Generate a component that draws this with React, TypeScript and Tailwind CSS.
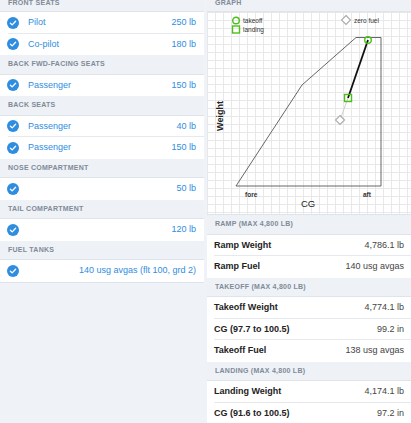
import React from "react";

const font = { fontFamily: '"Liberation Sans", Arial, sans-serif' };

function Check() {
  return (
    <svg width="12" height="12" viewBox="0 0 12 12" className="shrink-0">
      <circle cx="6" cy="6" r="6" fill="#2f8de0" />
      <path d="M3.4 6.2 L5.2 7.9 L8.6 4.3" stroke="#fff" strokeWidth="1.3" fill="none" strokeLinecap="round" strokeLinejoin="round" />
    </svg>
  );
}

function Header({ children, top }: { children: React.ReactNode; top?: boolean }) {
  return (
    <div className={`${top ? "h-[16.5px]" : "h-[19.5px]"} flex items-center px-[8px] bg-[#eef1f5] border-b border-[#dfe4ea] text-[7px] font-bold tracking-[0.25px] text-[#7f8b99] uppercase`}>
      {children}
    </div>
  );
}

function LeftRow({ label, value, last }: { label?: string; value: string; last?: boolean }) {
  return (
    <div className="h-[21.5px] flex items-center bg-white relative">
      <div className="pl-[7px] pr-[9px]"><Check /></div>
      <div className="flex-1 text-[9px] text-[#2f8de0]">{label}</div>
      <div className="pr-[8px] text-[9px] text-[#2f8de0]">{value}</div>
      {!last && <div className="absolute bottom-0 left-[8px] right-0 h-px bg-[#e6eaef]" />}
    </div>
  );
}

function RightRow({ label, value, last }: { label: string; value: string; last?: boolean }) {
  return (
    <div className="h-[21.5px] flex items-center bg-white relative px-[7px]">
      <div className="flex-1 text-[9px] font-bold text-[#222]">{label}</div>
      <div className="text-[9px] text-[#444]">{value}</div>
      {!last && <div className="absolute bottom-0 left-[7px] right-0 h-px bg-[#e6eaef]" />}
    </div>
  );
}

function Graph() {
  return (
    <div className="relative h-[203px] bg-white bg-[linear-gradient(to_right,#e8e8e8_1px,transparent_1px),linear-gradient(to_bottom,#e8e8e8_1px,transparent_1px)] bg-[size:8px_8px] border-b border-[#dfe4ea]">
      <svg width="204" height="203" className="absolute inset-0" style={font}>
        <polygon points="29,174 95,73 149,25.5 174,25.5 174,174" fill="none" stroke="#555" strokeWidth="0.9" />
        <line x1="141" y1="86" x2="133" y2="108" stroke="#ccc" strokeWidth="1" />
        <line x1="161" y1="28" x2="141" y2="86" stroke="#111" strokeWidth="1.8" />
        <circle cx="161" cy="28" r="3.3" fill="none" stroke="#4cbf1a" strokeWidth="1.4" />
        <rect x="137.5" y="82.5" width="7" height="7" fill="none" stroke="#4cbf1a" strokeWidth="1.4" />
        <polygon points="133,103.5 137.5,108 133,112.5 128.5,108" fill="#fff" stroke="#aaa" strokeWidth="1.1" />
        <circle cx="29" cy="8.5" r="3.3" fill="none" stroke="#4cbf1a" strokeWidth="1.4" />
        <text x="36" y="11" fontSize="6.5" fill="#333">takeoff</text>
        <rect x="25.5" y="14" width="7" height="7" fill="none" stroke="#4cbf1a" strokeWidth="1.4" />
        <text x="36" y="20" fontSize="6.5" fill="#333">landing</text>
        <polygon points="139,3.5 143.5,8 139,12.5 134.5,8" fill="#fff" stroke="#aaa" strokeWidth="1.1" />
        <text x="147" y="10.5" fontSize="6.5" fill="#333">zero fuel</text>
        <text x="0" y="0" fontSize="9" fontWeight="bold" fill="#222" textAnchor="middle" transform="translate(16 104) rotate(-90)">Weight</text>
        <text x="38" y="184.5" fontSize="6.5" fontWeight="bold" fill="#333">fore</text>
        <text x="156" y="184.5" fontSize="6.5" fontWeight="bold" fill="#333">aft</text>
        <text x="101" y="195" fontSize="9.5" fill="#222" textAnchor="middle">CG</text>
      </svg>
    </div>
  );
}

export default function App() {
  return (
    <div className="w-[411px] h-[423px] overflow-hidden bg-[#eff2f6]" style={font}>
      <div className="flex gap-[3px] mt-[-4.5px]">
        <div className="w-[204px] flex flex-col">
          <Header top>Front Seats</Header>
          <LeftRow label="Pilot" value="250 lb" />
          <LeftRow label="Co-pilot" value="180 lb" last />
          <Header>Back FWD-Facing Seats</Header>
          <LeftRow label="Passenger" value="150 lb" last />
          <Header>Back Seats</Header>
          <LeftRow label="Passenger" value="40 lb" />
          <LeftRow label="Passenger" value="150 lb" last />
          <Header>Nose Compartment</Header>
          <LeftRow value="50 lb" last />
          <Header>Tail Compartment</Header>
          <LeftRow value="120 lb" last />
          <Header>Fuel Tanks</Header>
          <LeftRow value="140 usg avgas (flt 100, grd 2)" last />
          <div className="h-px bg-[#dfe4ea]" />
        </div>
        <div className="flex-1 flex flex-col">
          <Header top>Graph</Header>
          <Graph />
          <Header>Ramp (Max 4,800 LB)</Header>
          <RightRow label="Ramp Weight" value="4,786.1 lb" />
          <RightRow label="Ramp Fuel" value="140 usg avgas" last />
          <Header>Takeoff (Max 4,800 LB)</Header>
          <RightRow label="Takeoff Weight" value="4,774.1 lb" />
          <RightRow label="CG (97.7 to 100.5)" value="99.2 in" />
          <RightRow label="Takeoff Fuel" value="138 usg avgas" last />
          <Header>Landing (Max 4,800 LB)</Header>
          <RightRow label="Landing Weight" value="4,174.1 lb" />
          <RightRow label="CG (91.6 to 100.5)" value="97.2 in" />
        </div>
      </div>
    </div>
  );
}
